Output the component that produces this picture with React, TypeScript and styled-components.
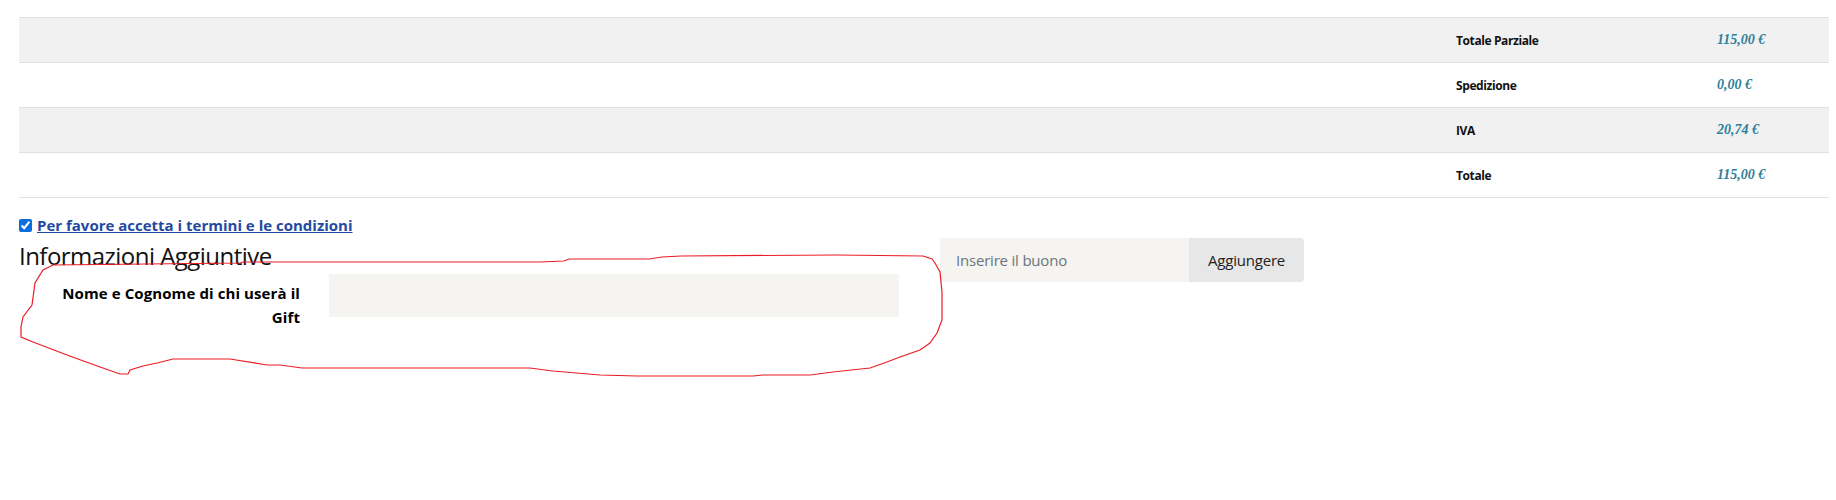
import React from "react";
import styled, { createGlobalStyle } from "styled-components";

const Global = createGlobalStyle`
  html, body { margin: 0; padding: 0; background: #fff; }
  body { font-family: "Open Sans", "Noto Sans", sans-serif; color: #000; }
`;

const Page = styled.div`
  position: relative;
  width: 1836px;
  height: 500px;
  box-sizing: border-box;
  padding: 17px 7px 0 19px;
  overflow: hidden;
`;

const Totals = styled.div`
  border-top: 1px solid #e0e0e3;
`;

const TotalRow = styled.div<{ $shaded: boolean }>`
  display: grid;
  grid-template-columns: 1fr 261px 112px;
  align-items: center;
  height: 44px;
  border-bottom: 1px solid #e0e0e3;
  background: ${(p) => (p.$shaded ? "#f1f1f1" : "#fff")};
`;

const TotalLabel = styled.div`
  grid-column: 2;
  font-family: "Open Sans", sans-serif;
  font-weight: 700;
  font-size: 12px;
  letter-spacing: -0.4px;
  color: #111;
`;

const TotalValue = styled.div`
  grid-column: 3;
  font-family: "Liberation Serif", "Times New Roman", serif;
  font-style: italic;
  font-weight: 700;
  font-size: 14px;
  color: #2f7f98;
`;

const Terms = styled.label`
  display: flex;
  align-items: center;
  gap: 5px;
  margin-top: 17px;
  height: 20px;
`;

const Check = styled.input`
  margin: 0;
  width: 13px;
  height: 13px;
  accent-color: #0a6ee0;
`;

const TermsLink = styled.a`
  font-family: "Open Sans", sans-serif;
  font-weight: 700;
  font-size: 15px;
  letter-spacing: 0;
  color: #2449a2;
  text-decoration: underline;
`;

const Lower = styled.div`
  display: flex;
  align-items: flex-start;
  margin-top: 3px;
`;

const LeftCol = styled.div`
  width: 921px;
  flex: none;
`;

const Heading = styled.h4`
  margin: 4px 0 0;
  font-family: "Open Sans", sans-serif;
  font-weight: 400;
  font-size: 24px;
  line-height: 28.8px;
  letter-spacing: -0.53px;
  color: #111;
`;

const FormRow = styled.div`
  display: flex;
  align-items: flex-start;
  margin-top: 3px;
`;

const FieldLabel = styled.div`
  width: 281px;
  flex: none;
  box-sizing: border-box;
  padding-top: 7px;
  text-align: right;
  font-family: "Open Sans", sans-serif;
  font-weight: 700;
  font-size: 15px;
  line-height: 24.5px;
  letter-spacing: 0.1px;
  color: #000;
`;

const GiftInput = styled.input`
  margin-left: 29px;
  width: 570px;
  height: 43px;
  box-sizing: border-box;
  border: none;
  background: #f5f4f1;
  outline: none;
`;

const CouponGroup = styled.div`
  display: flex;
  height: 44px;
`;

const CouponInput = styled.input`
  width: 249px;
  box-sizing: border-box;
  border: none;
  background: #f5f4f1;
  padding: 0 16px;
  font-family: "Open Sans", sans-serif;
  font-size: 15px;
  letter-spacing: -0.2px;
  color: #333;
  outline: none;
  &::placeholder { color: #6c757d; }
`;

const CouponButton = styled.button`
  width: 115px;
  border: none;
  border-radius: 0 4px 4px 0;
  background: #e7e7e7;
  font-family: "Open Sans", sans-serif;
  font-size: 15px;
  letter-spacing: -0.2px;
  color: #222;
  padding: 0;
`;

const Scribble = styled.svg`
  position: absolute;
  left: 0;
  top: 0;
  pointer-events: none;
`;

const rows: [string, string][] = [
  ["Totale Parziale", "115,00 €"],
  ["Spedizione", "0,00 €"],
  ["IVA", "20,74 €"],
  ["Totale", "115,00 €"],
];

export default function App() {
  return (
    <>
      <Global />
      <Page>
        <Totals>
          {rows.map(([l, v], i) => (
            <TotalRow key={l} $shaded={i % 2 === 0}>
              <TotalLabel>{l}</TotalLabel>
              <TotalValue>{v}</TotalValue>
            </TotalRow>
          ))}
        </Totals>
        <Terms>
          <Check type="checkbox" defaultChecked />
          <TermsLink href="#">Per favore accetta i termini e le condizioni</TermsLink>
        </Terms>
        <Lower>
          <LeftCol>
            <Heading>Informazioni Aggiuntive</Heading>
            <FormRow>
              <FieldLabel>
                Nome e Cognome di chi userà il
                <br />
                Gift
              </FieldLabel>
              <GiftInput type="text" />
            </FormRow>
          </LeftCol>
          <CouponGroup>
            <CouponInput type="text" placeholder="Inserire il buono" />
            <CouponButton type="button">Aggiungere</CouponButton>
          </CouponGroup>
        </Lower>
        <Scribble width="1836" height="500" viewBox="0 0 1836 500">
          <path
            d="M53 265 L240 263 L243 262 L330 262 L540 262 L564 261 L569 259 L649 259 L662 257 L681 256 L837 255 L923 256 L932 259 L935 263 L940 272 L942 292 L942 320 L937 333 L930 343 L920 350 L900 357 L887 362 L870 368 L833 372 L810 375 L763 375 L753 376 L637 376 L600 375 L553 371 L530 368 L302 368 L280 365 L267 365 L230 359 L173 359 L157 363 L143 366 L130 370 L128 374 L120 374 L100 367 L67 355 L33 342 L21 337 L21 327 L23 317 L32 305 L35 283 L43 270 Z"
            fill="none"
            stroke="#ec1c24"
            strokeWidth="1.2"
          />
        </Scribble>
      </Page>
    </>
  );
}
